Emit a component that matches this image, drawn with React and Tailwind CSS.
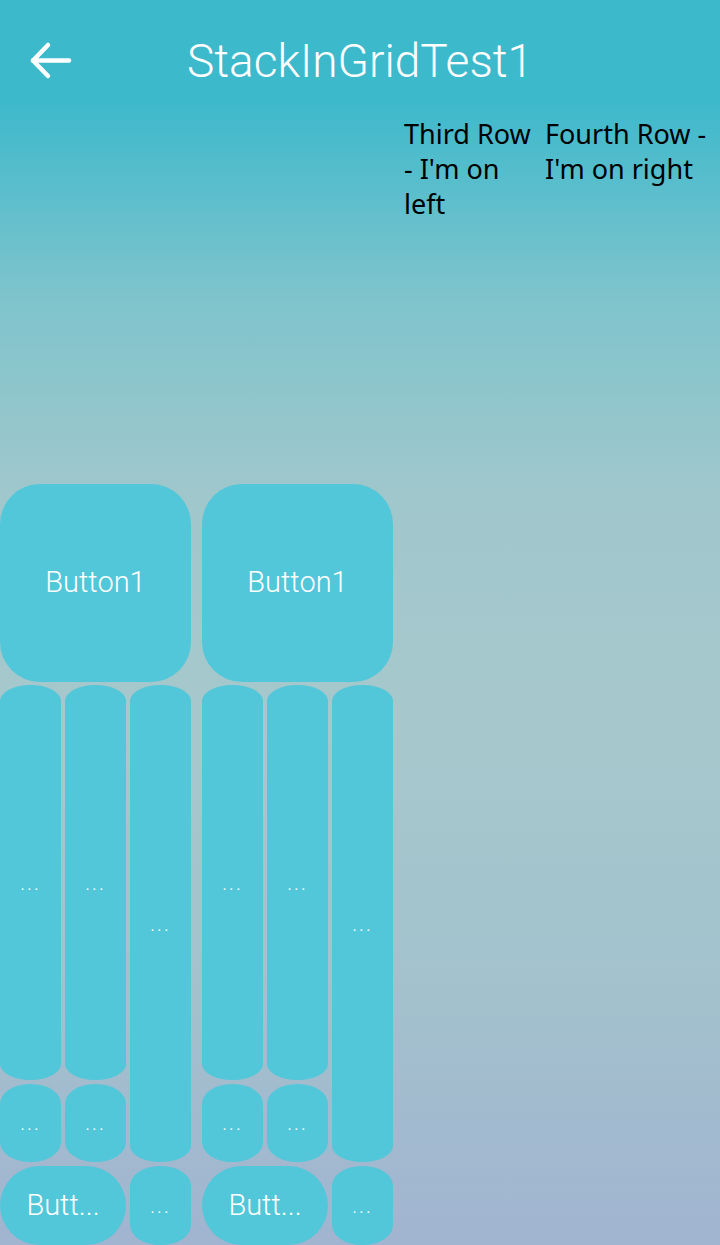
import React from "react";

const pill = "flex items-center justify-center bg-[#52c7d9] text-white";

const Dots = () => (
  <span className="text-[20px] leading-none tracking-[2px] font-light">...</span>
);

const Stack = () => (
  <div className="flex flex-col gap-[3px] w-[191px] shrink-0">
    <div className={`${pill} h-[198px] rounded-[40px] text-[29px] font-light`}>Button1</div>
    <div className="grid grid-cols-3 grid-rows-[395px_78px_79px] gap-[4px]">
      <div className={`${pill} rounded-[30px/16px]`}>
        <Dots />
      </div>
      <div className={`${pill} rounded-[30px/16px]`}>
        <Dots />
      </div>
      <div className={`${pill} row-span-2 rounded-[30px/16px]`}>
        <Dots />
      </div>
      <div className={`${pill} rounded-[30px/20px]`}>
        <Dots />
      </div>
      <div className={`${pill} rounded-[30px/20px]`}>
        <Dots />
      </div>
      <div className={`${pill} col-span-2 rounded-[40px] text-[29px] font-light`}>Butt...</div>
      <div className={`${pill} rounded-[30px/20px]`}>
        <Dots />
      </div>
    </div>
  </div>
);

export default function App() {
  return (
    <div className="w-[720px] h-[1245px] overflow-hidden bg-[linear-gradient(to_bottom,#3db9cc_0%,#3db9cc_8%,#7fc4cc_24%,#a0c7cc_40%,#a6c8cc_58%,#a3c2cd_78%,#a1b4d0_100%)] font-['Roboto',sans-serif]">
      {/* Header */}
      <div className="relative h-[110px] flex items-center justify-center">
        <button className="absolute left-[28px] top-[40px] w-[46px] h-[42px]" aria-label="Back">
          <svg viewBox="0 0 46 42" className="w-[46px] h-[42px]" fill="none" stroke="white" strokeWidth="4.5" strokeLinecap="round" strokeLinejoin="round">
            <path d="M41 20.5H5" />
            <path d="M20 5L5 20.5L20 36" />
          </svg>
        </button>
        <h1 className="text-[46px] text-white font-light leading-none mt-[12px]">StackInGridTest1</h1>
      </div>

      {/* Grid body */}
      <div className="flex gap-[11px]">
        <div className="flex gap-[11px] pt-[374px]">
          <Stack />
          <Stack />
        </div>
        <div className="w-[130px] shrink-0 pt-[6px] text-[27px] leading-[35px] text-black font-['Noto_Sans',sans-serif]">
          Third Row - I'm on left
        </div>
        <div className="w-[175px] shrink-0 pt-[6px] text-[27px] leading-[35px] text-black font-['Noto_Sans',sans-serif]">
          Fourth Row - I'm on right
        </div>
      </div>
    </div>
  );
}
